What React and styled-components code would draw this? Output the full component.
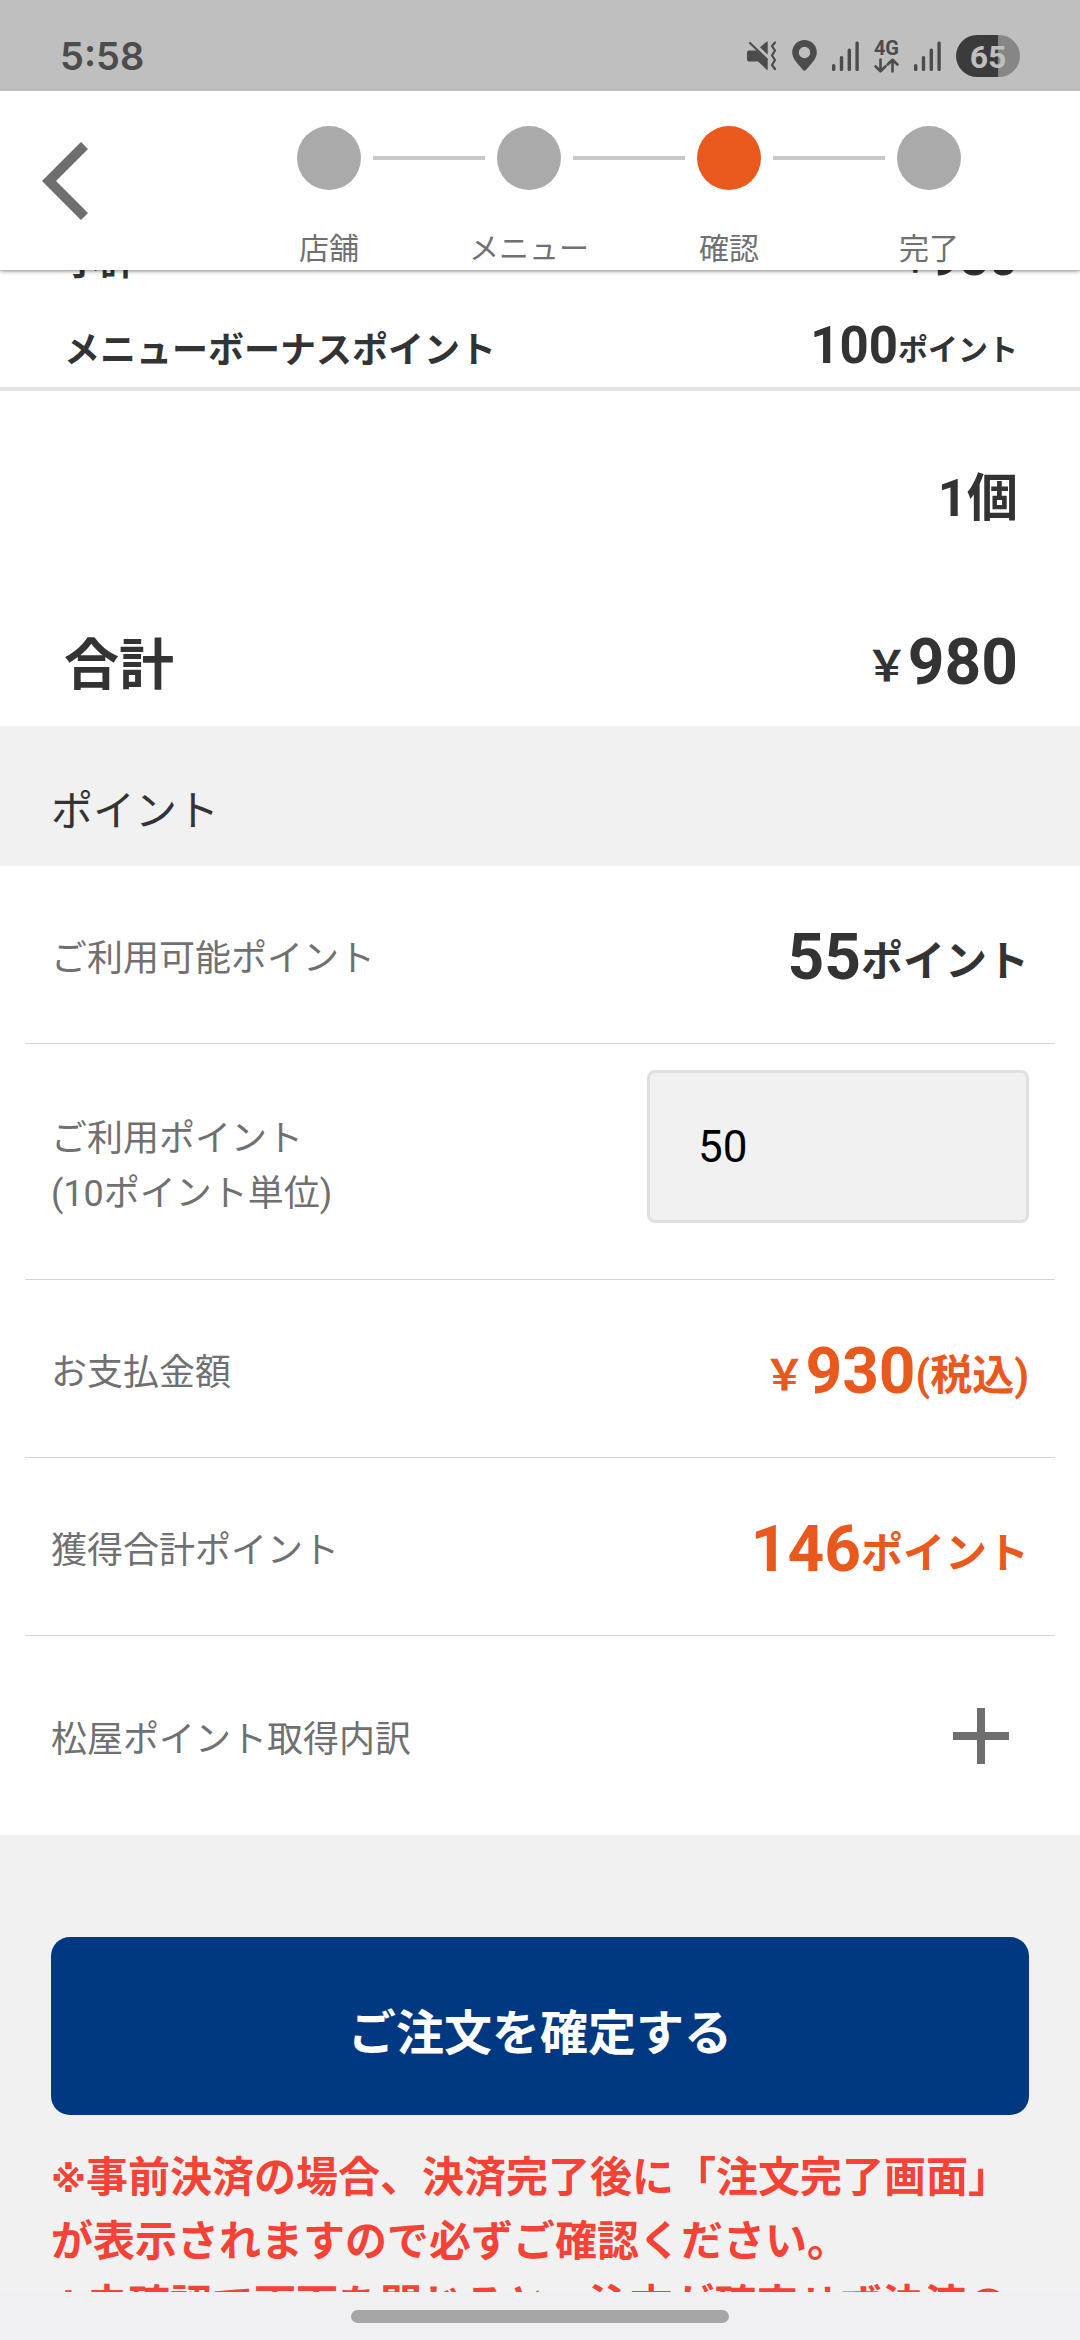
import React, { useState } from 'react'
import styled, { createGlobalStyle } from 'styled-components'

const GlobalStyle = createGlobalStyle`
  * {
    box-sizing: border-box;
  }
  body {
    margin: 0;
    background: #fff;
    color: #333;
    font-family: Roboto, 'Noto Sans CJK JP', sans-serif;
  }
`

const Screen = styled.div`
  display: flex;
  flex-direction: column;
  height: 100vh;
  overflow: hidden;
`

/* status bar */
const StatusBar = styled.div`
  display: flex;
  flex: none;
  align-items: center;
  justify-content: space-between;
  position: relative;
  z-index: 2;
  padding: 20px 60px 0;
  min-height: 91px;
  background: #bfbfbf;
  color: #4c4c4c;
`
const Clock = styled.time`
  font-family: Inter, sans-serif;
  font-size: 38px;
  font-weight: 600;
`
const StatusIcons = styled.div`
  display: flex;
  align-items: center;
  gap: 15px;
`
const Network = styled.div`
  display: flex;
  flex-direction: column;
  align-items: center;
  font-size: 20px;
  font-weight: 700;
  line-height: 20px;
`
const Battery = styled.div`
  width: 64px;
  height: 42px;
  border-radius: 21px;
  background: linear-gradient(to right, #3b3b3b 65%, #868686 65%);
  color: #bfbfbf;
  font-size: 32px;
  font-weight: 700;
  line-height: 44px;
  text-align: center;
`

/* header with the order steps */
const Header = styled.header`
  display: flex;
  flex: none;
  position: relative;
  z-index: 1;
  padding-right: 51px;
  min-height: 179px;
  background: #fff;
  box-shadow: 0 1px 4px rgba(0, 0, 0, 0.5);
`
const BackButton = styled.button`
  display: flex;
  align-items: center;
  width: 229px;
  padding: 0 0 0 42px;
  border: 0;
  background: none;
  color: #6e6e6e;
`
const Stepper = styled.ol`
  display: flex;
  flex: 1;
  margin: 0;
  padding: 35px 0 0;
  list-style: none;
`
const Step = styled.li`
  flex: 1;
  color: #707070;
  font-family: 'Noto Sans CJK JP', sans-serif;
  font-size: 30px;
  line-height: 40px;
  text-align: center;
`
const Track = styled.div`
  display: flex;
  align-items: center;
  gap: 12px;
  margin-bottom: 36px;
`
const Line = styled.span`
  flex: 1;
  height: 4px;
  background: ${({ $hidden }) => ($hidden ? 'transparent' : '#c8c8c8')};
`
const Dot = styled.span`
  width: 64px;
  height: 64px;
  border-radius: 50%;
  background: ${({ $active }) => ($active ? '#e9581c' : '#aaa')};
`

/* order summary */
const Content = styled.main`
  flex: 1;
  min-height: 0;
  overflow: hidden;
  background: #f1f1f1;
`
const MenuSummary = styled.section`
  display: flex;
  flex-direction: column;
  gap: 2px;
  margin-top: -57px;
  padding: 0 62px 0 64px;
  border-bottom: 4px solid #e2e2e2;
  background: #fff;
`
const SummaryRow = styled.div`
  display: flex;
  align-items: baseline;
  justify-content: space-between;
  font-weight: 700;
`
const SummaryLabel = styled.span`
  font-size: ${({ $large }) => ($large ? 55 : 36)}px;
  line-height: 1;
`
const Amount = styled.span`
  padding-top: 4px;
  font-size: 51px;
  font-weight: 700;
  line-height: 82px;
`
const Unit = styled.span`
  font-size: ${({ $small }) => ($small ? 30 : 42)}px;
  line-height: 1;
  vertical-align: 3px;
`
const TotalSummary = styled.section`
  display: flex;
  flex-direction: column;
  gap: 72px;
  padding: 70px 62px 15px 64px;
  background: #fff;
`
const Quantity = styled.div`
  font-size: 51px;
  font-weight: 700;
  line-height: 76px;
  text-align: right;
`
const Total = styled.span`
  padding-top: 6px;
  color: ${({ $accent }) => ($accent ? '#e9581c' : '#333')};
  font-size: 64px;
  font-weight: 700;
  line-height: 96px;
`

/* points */
const SectionTitle = styled.h2`
  margin: 0;
  padding: 54px 51px 22px;
  font-size: 42px;
  font-weight: 400;
  line-height: 64px;
`
const PointList = styled.section`
  padding: 0 25px;
  background: #fff;
`
const PointRow = styled.div`
  display: flex;
  align-items: center;
  justify-content: space-between;
  min-height: ${({ $last }) => ($last ? 199 : 178)}px;
  padding: 0 26px;
  border-bottom: ${({ $last }) => ($last ? '0' : '1px solid #d4d4d4')};
`
const InputRow = styled(PointRow)`
  min-height: 236px;
`
const PointLabel = styled.label`
  padding-top: 10px;
  color: #707070;
  font-size: 36px;
  line-height: 55px;
`
const PointInput = styled.input`
  align-self: flex-start;
  width: 382px;
  height: 153px;
  margin-top: 26px;
  padding: 0 48px;
  border: 3px solid #e0e0e0;
  border-radius: 8px;
  background: #f1f1f1;
  color: #000;
  font-family: Roboto, sans-serif;
  font-size: 44px;
`
const ExpandButton = styled.button`
  display: flex;
  padding: 0 20px;
  border: 0;
  background: none;
  color: #6e6e6e;
`

/* confirm */
const Confirm = styled.section`
  padding: 102px 51px 0;
`
const ConfirmButton = styled.button`
  display: block;
  width: 100%;
  padding: 56px 0 50px;
  border: 0;
  border-radius: 19px;
  background: #003882;
  color: #fff;
  font-family: 'Noto Sans CJK JP', sans-serif;
  font-size: 48px;
  font-weight: 700;
  line-height: 72px;
`
const Notice = styled.p`
  margin: 27px 0 0;
  color: #f44336;
  font-family: 'Noto Sans CJK JP', sans-serif;
  font-size: 42px;
  font-weight: 700;
  line-height: 64px;
`
const Mark = styled.span`
  font-family: 'DejaVu Sans', sans-serif;
  font-size: 36px;
  line-height: 1;
`

const NavBar = styled.div`
  display: flex;
  flex: none;
  justify-content: center;
  min-height: 48px;
  padding-top: 18px;
  background: #f0f0f2;
`
const Handle = styled.div`
  width: 35%;
  height: 13px;
  border-radius: 7px;
  background: #a6a6a6;
`

const MuteIcon = () => (
  <svg width="30" height="30" viewBox="0 0 30 30" fill="currentColor">
    <path d="M2 9.5H9.5L20.7 20V29.5L11 20.5H2Q0 20.5 0 18.5V11.5Q0 9.5 2 9.5Z" />
    <path d="M13 6.2L19.5 .8Q20.7 .2 20.7 1.6V13.8Z" />
    <path
      d="M3 2L20 18.5M28 1.5L25 5L28 9.5L25 14.5L28 19L25 24L28 28"
      fill="none"
      stroke="currentColor"
      strokeWidth="2.2"
      strokeLinecap="round"
      strokeLinejoin="round"
    />
  </svg>
)

const PinIcon = () => (
  <svg width="25" height="31" viewBox="0 0 25 31" fill="currentColor">
    <path
      fillRule="evenodd"
      d="M12.5 0A12.3 12.3 0 0 0 .2 12.3C.2 19 6 24 11 30Q12.5 31.6 14 30C19 24 24.8 19 24.8 12.3A12.3 12.3 0 0 0 12.5 0ZM12.5 6.8A5.7 5.7 0 1 1 12.5 18.2A5.7 5.7 0 1 1 12.5 6.8Z"
    />
  </svg>
)

const SignalIcon = () => (
  <svg width="27" height="30" viewBox="0 0 27 30" fill="currentColor">
    <rect x="0" y="23" width="3.4" height="7" rx="1.5" />
    <rect x="7.8" y="15" width="3.4" height="15" rx="1.5" />
    <rect x="15.6" y="7.5" width="3.4" height="22.5" rx="1.5" />
    <rect x="23.4" y="0.5" width="3.4" height="29.5" rx="1.5" />
  </svg>
)

const ArrowsIcon = () => (
  <svg
    width="25"
    height="15"
    viewBox="0 0 25 15"
    fill="none"
    stroke="currentColor"
    strokeWidth="2.6"
    strokeLinecap="round"
    strokeLinejoin="round"
  >
    <path d="M6.5 1.5V13M1.6 8.5L6.5 13.2L11.4 8.5M18.5 13.5V2M13.6 6.5L18.5 1.8L23.4 6.5" />
  </svg>
)

const BackIcon = () => (
  <svg width="46" height="78" viewBox="0 0 46 78">
    <path d="M42.5 3.5L7 39L42.5 74.5" fill="none" stroke="currentColor" strokeWidth="10" />
  </svg>
)

const PlusIcon = () => (
  <svg width="56" height="56" viewBox="0 0 56 56" fill="currentColor">
    <path d="M24 0H32V24H56V32H32V56H24V32H0V24H24Z" />
  </svg>
)

const steps = ['店舗', 'メニュー', '確認', '完了']

const App = () => {
  const [points, setPoints] = useState('50')
  return (
    <Screen>
      <GlobalStyle />
      <StatusBar>
        <Clock>5:58</Clock>
        <StatusIcons>
          <MuteIcon />
          <PinIcon />
          <SignalIcon />
          <Network>
            4G
            <ArrowsIcon />
          </Network>
          <SignalIcon />
          <Battery>65</Battery>
        </StatusIcons>
      </StatusBar>
      <Header>
        <BackButton type="button" aria-label="戻る">
          <BackIcon />
        </BackButton>
        <Stepper>
          {steps.map((step, i) => (
            <Step key={step}>
              <Track>
                <Line $hidden={i === 0} />
                <Dot $active={step === '確認'} />
                <Line $hidden={i === steps.length - 1} />
              </Track>
              {step}
            </Step>
          ))}
        </Stepper>
      </Header>
      <Content>
        <MenuSummary>
          <SummaryRow>
            <SummaryLabel>小計</SummaryLabel>
            <Amount>
              <Unit $small>￥</Unit>980
            </Amount>
          </SummaryRow>
          <SummaryRow>
            <SummaryLabel>メニューボーナスポイント</SummaryLabel>
            <Amount>
              100<Unit $small>ポイント</Unit>
            </Amount>
          </SummaryRow>
        </MenuSummary>
        <TotalSummary>
          <Quantity>1個</Quantity>
          <SummaryRow>
            <SummaryLabel $large>合計</SummaryLabel>
            <Total>
              <Unit>￥</Unit>980
            </Total>
          </SummaryRow>
        </TotalSummary>
        <SectionTitle>ポイント</SectionTitle>
        <PointList>
          <PointRow>
            <PointLabel as="span">ご利用可能ポイント</PointLabel>
            <Total>
              55<Unit>ポイント</Unit>
            </Total>
          </PointRow>
          <InputRow>
            <PointLabel htmlFor="use-points">
              ご利用ポイント
              <br />
              (10ポイント単位)
            </PointLabel>
            <PointInput
              id="use-points"
              inputMode="numeric"
              value={points}
              onChange={e => setPoints(e.target.value)}
            />
          </InputRow>
          <PointRow>
            <PointLabel as="span">お支払金額</PointLabel>
            <Total $accent>
              <Unit>￥</Unit>930<Unit>(税込)</Unit>
            </Total>
          </PointRow>
          <PointRow>
            <PointLabel as="span">獲得合計ポイント</PointLabel>
            <Total $accent>
              146<Unit>ポイント</Unit>
            </Total>
          </PointRow>
          <PointRow $last>
            <PointLabel as="span">松屋ポイント取得内訳</PointLabel>
            <ExpandButton type="button" aria-label="内訳を表示">
              <PlusIcon />
            </ExpandButton>
          </PointRow>
        </PointList>
        <Confirm>
          <ConfirmButton type="button">ご注文を確定する</ConfirmButton>
          <Notice>
            <Mark>※</Mark>事前決済の場合、決済完了後に「注文完了画面」が表示されますので必ずご確認ください。
            <br />
            <Mark>※</Mark>未確認で画面を閉じると、注文が確定せず決済のみ行われる場合があります。
          </Notice>
        </Confirm>
      </Content>
      <NavBar>
        <Handle />
      </NavBar>
    </Screen>
  )
}

export default App
